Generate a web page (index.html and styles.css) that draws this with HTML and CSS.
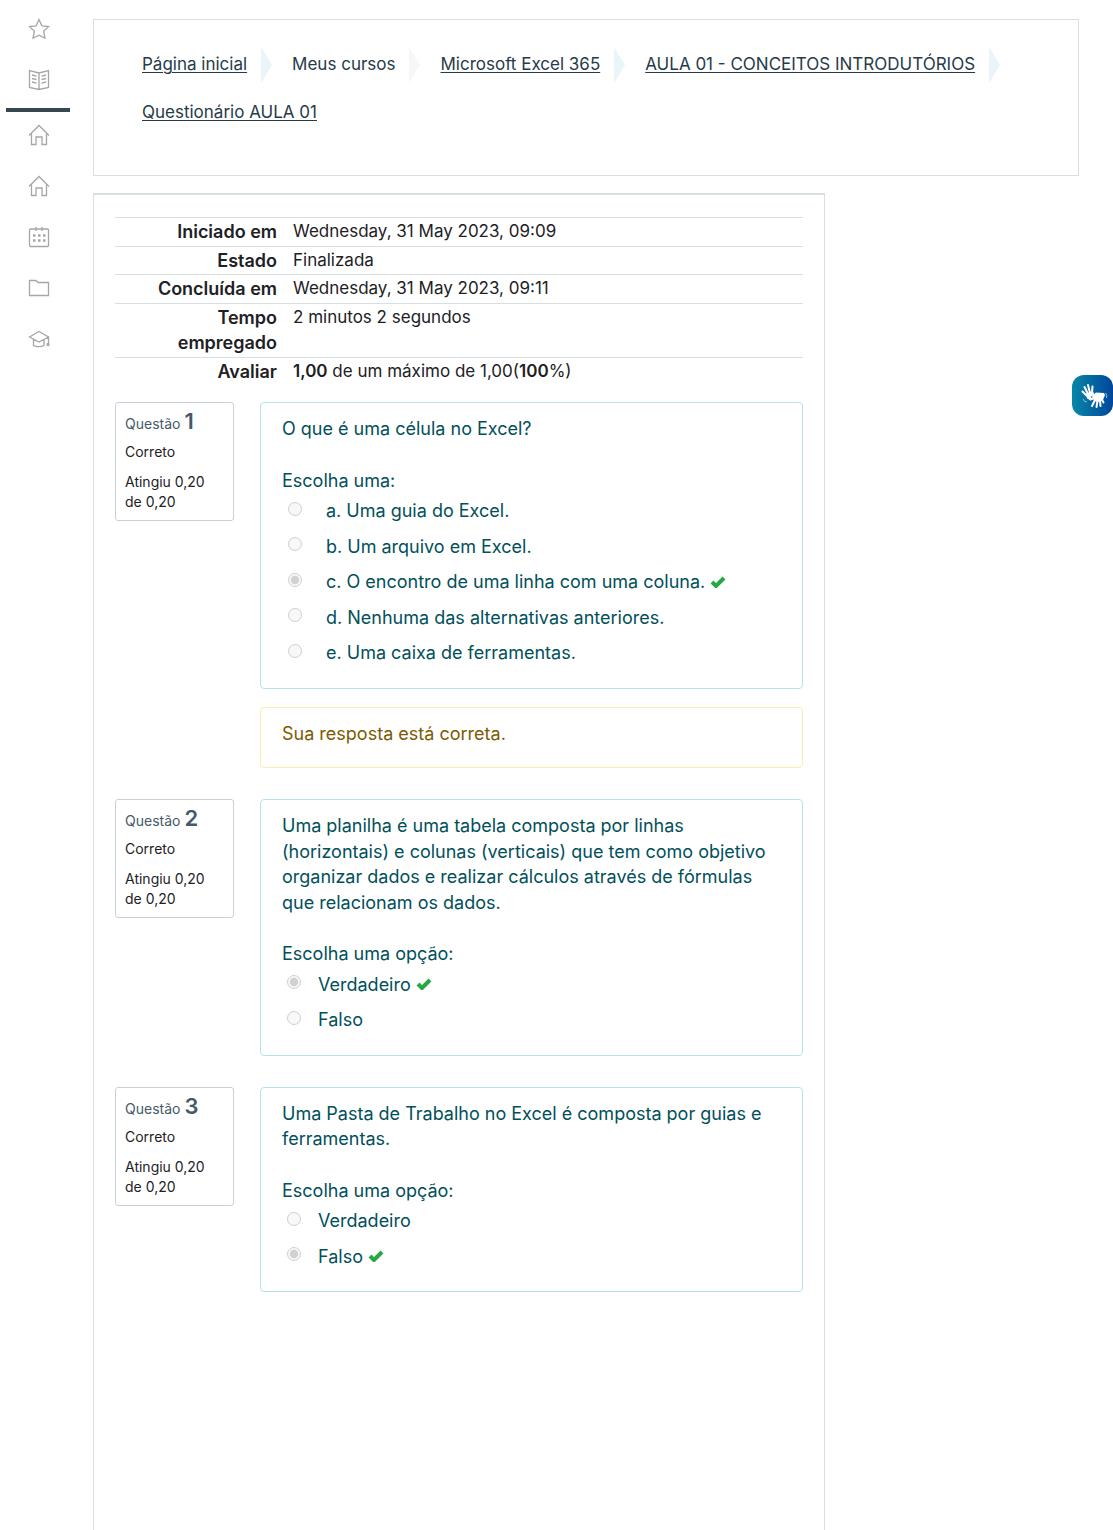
FILE: index.html
```html
<!DOCTYPE html>
<html lang="pt-BR">
<head>
  <meta charset="UTF-8">
  <meta name="viewport" content="width=device-width, initial-scale=1.0">
  <title>Questionário AULA 01</title>
  <link rel="stylesheet" href="styles.css">
</head>
<body>
  <nav class="sidebar">
    <a href="#" class="side-link">
      <svg class="icon" viewBox="0 0 22 22"><path d="M11 1.500l2.900 6.300 6.600.8-4.900 4.600 1.400 6.800L11 17.200 5 20l1.400-6.800L1.500 8.600l6.600-.8z"/></svg>
    </a>
    <a href="#" class="side-link">
      <svg class="icon" viewBox="0 0 22 22"><path d="M11 4L1.500 1.500v17L11 20.500l9.500-2V1.500zM11 4v16.500M4 6l4.500 1.200M4 9.500l4.500 1.200M4 13l4.500 1.200M18 6l-4.500 1.200M18 9.500l-4.500 1.200M18 13l-4.500 1.200"/></svg>
    </a>
    <div class="side-bar"></div>
    <a href="#" class="side-link">
      <svg class="icon" viewBox="0 0 22 22"><path d="M1 11.500L11 1.500l10 10M3.500 9.500v11h4.500v-7.500h6v7.500h4.500v-11"/></svg>
    </a>
    <a href="#" class="side-link">
      <svg class="icon" viewBox="0 0 22 22"><path d="M1 11.500L11 1.500l10 10M3.500 9.500v11h4.500v-7.500h6v7.500h4.500v-11"/></svg>
    </a>
    <a href="#" class="side-link">
      <svg class="icon" viewBox="0 0 22 22"><rect x="1.500" y="3" width="19" height="17.500" rx="1"/><path d="M8 1v4M14 1v4"/><path class="dots" d="M5 9.500h2.500M10 9.500h2.500M15 9.500h2.500M5 14.500h2.500M10 14.500h2.500M15 14.500h2.500"/></svg>
    </a>
    <a href="#" class="side-link">
      <svg class="icon" viewBox="0 0 22 22"><path d="M1.500 18.500v-15h6.500l2 2h10.500v13z"/></svg>
    </a>
    <a href="#" class="side-link">
      <svg class="icon" viewBox="0 0 22 22"><path d="M11 3.500L1.500 9l9.500 5 9.500-5zM5.500 11.500v6c2.500 1.500 8 1.500 10.500 0v-6M20.500 9v7"/><circle cx="20" cy="16.500" r="1"/></svg>
    </a>
  </nav>

  <div class="page">
    <header class="page-header">
      <ol class="breadcrumb">
        <li><a href="#">Página inicial</a></li>
        <li class="plain"><span>Meus cursos</span></li>
        <li><a href="#">Microsoft Excel 365</a></li>
        <li><a href="#">AULA 01 - CONCEITOS INTRODUTÓRIOS</a></li>
        <li><a href="#">Questionário AULA 01</a></li>
      </ol>
    </header>

    <main class="content">
      <table class="summary">
        <tr><th scope="row">Iniciado em</th><td>Wednesday, 31 May 2023, 09:09</td></tr>
        <tr><th scope="row">Estado</th><td>Finalizada</td></tr>
        <tr><th scope="row">Concluída em</th><td>Wednesday, 31 May 2023, 09:11</td></tr>
        <tr><th scope="row">Tempo empregado</th><td>2 minutos 2 segundos</td></tr>
        <tr><th scope="row">Avaliar</th><td><b>1,00</b> de um máximo de 1,00(<b>100</b>%)</td></tr>
      </table>

      <section class="question">
        <div class="info">
          <h3>Questão <span class="number">1</span></h3>
          <p>Correto</p>
          <p>Atingiu 0,20 de 0,20</p>
        </div>
        <div class="body">
          <div class="formulation">
            <p class="text">O que é uma célula no Excel?</p>
            <p>Escolha uma:</p>
            <div class="option multi"><input type="radio" name="q1" id="q1a" disabled><label for="q1a">a. Uma guia do Excel.</label></div>
            <div class="option multi"><input type="radio" name="q1" id="q1b" disabled><label for="q1b">b. Um arquivo em Excel.</label></div>
            <div class="option multi"><input type="radio" name="q1" id="q1c" checked disabled><label for="q1c">c. O encontro de uma linha com uma coluna.</label>
              <svg class="check" viewBox="0 0 16 12"><path d="M2 6l4 4 8-8"/></svg></div>
            <div class="option multi"><input type="radio" name="q1" id="q1d" disabled><label for="q1d">d. Nenhuma das alternativas anteriores.</label></div>
            <div class="option multi"><input type="radio" name="q1" id="q1e" disabled><label for="q1e">e. Uma caixa de ferramentas.</label></div>
          </div>
          <div class="feedback">Sua resposta está correta.</div>
        </div>
      </section>

      <section class="question">
        <div class="info">
          <h3>Questão <span class="number">2</span></h3>
          <p>Correto</p>
          <p>Atingiu 0,20 de 0,20</p>
        </div>
        <div class="body">
          <div class="formulation">
            <p class="text">Uma planilha é uma tabela composta por linhas (horizontais) e colunas (verticais) que tem como objetivo organizar dados e realizar cálculos através de fórmulas que relacionam os dados.</p>
            <p>Escolha uma opção:</p>
            <div class="option"><input type="radio" name="q2" id="q2v" checked disabled><label for="q2v">Verdadeiro</label>
              <svg class="check" viewBox="0 0 16 12"><path d="M2 6l4 4 8-8"/></svg></div>
            <div class="option"><input type="radio" name="q2" id="q2f" disabled><label for="q2f">Falso</label></div>
          </div>
        </div>
      </section>

      <section class="question">
        <div class="info">
          <h3>Questão <span class="number">3</span></h3>
          <p>Correto</p>
          <p>Atingiu 0,20 de 0,20</p>
        </div>
        <div class="body">
          <div class="formulation">
            <p class="text">Uma Pasta de Trabalho no Excel é composta por guias e ferramentas.</p>
            <p>Escolha uma opção:</p>
            <div class="option"><input type="radio" name="q3" id="q3v" disabled><label for="q3v">Verdadeiro</label></div>
            <div class="option"><input type="radio" name="q3" id="q3f" checked disabled><label for="q3f">Falso</label>
              <svg class="check" viewBox="0 0 16 12"><path d="M2 6l4 4 8-8"/></svg></div>
          </div>
        </div>
      </section>
    </main>
  </div>

  <button class="libras" aria-label="Libras">
    <svg viewBox="0 0 41 41">
      <path class="hand" d="M15 21L10.500 16.500M16 19L12.500 12M18 18L16 10M20 18L20.500 11.500"/>
      <path class="palm" d="M14 18.500l7-2 1.500 3-4 2.500 2 1.500-2.500 1.500-3-1.500z"/>
      <path class="hand" d="M23 25L20 31M25.500 26L24.500 32M28 25L28.500 31M29 23L31.500 27.500M24 22L18.500 24.500"/>
      <path class="palm" d="M20 21l4-3.500 8 .5 1 2-2 5-5 2-4-1z"/>
      <path class="motion" d="M11 24q1 3 4 3M33.500 18q2 2 1 5"/>
    </svg>
  </button>
</body>
</html>
```
FILE: styles.css
```css
* {
  box-sizing: border-box;
}
body {
  margin: 0;
  min-height: 100vh;
  display: flex;
  font-family: Inter, sans-serif;
  font-size: 17px;
  line-height: 150%; /* same line box for the larger question text */
  color: #1d2125;
  background-color: #fff;
}
p, h3 {
  margin: 0;
}

/* Left navigation */
.sidebar {
  width: 77px;
  flex-shrink: 0;
  padding-top: 3px;
}
.side-link {
  display: flex;
  align-items: center;
  justify-content: center;
  height: 51px;
}
.icon {
  width: 22px;
  height: 22px;
  fill: none;
  stroke: #a6a6a6;
  stroke-width: 1.3;
}
.icon .dots {
  stroke-width: 2.5;
}
.side-bar {
  height: 4px;
  margin: 3px 7px -3px 6px;
  background-color: #37474f;
}

.page {
  flex: 1;
  display: flex;
  flex-direction: column;
  padding: 19px 34px 0 16px;
}

/* Breadcrumb */
.page-header {
  border: 1px solid #d8dfe1;
  padding: 21px 40px 38px 48px;
  margin-bottom: 17px;
}
.breadcrumb {
  display: flex;
  flex-wrap: wrap;
  column-gap: 20px;
  list-style: none;
  margin: 0;
  padding: 0;
}
.breadcrumb li {
  display: flex;
  align-items: center;
  gap: 14px;
  height: 48px;
  color: #263b48;
}
.breadcrumb a {
  color: #263b48;
  text-underline-offset: 2px;
}
.breadcrumb li:not(:last-child)::after {
  content: "";
  border-left: 11px solid #ebf4f8;
  border-top: 18px solid transparent;
  border-bottom: 18px solid transparent;
}
.breadcrumb li.plain::after {
  border-left-color: #f6f7f8;
}

/* Quiz review */
.content {
  flex: 1;
  width: calc(100% - 254px);
  border: 1px solid #d8dfe3;
  border-top-width: 2px;
  border-bottom: 0;
  padding: 22px 21px;
}
.summary {
  width: 100%;
  border-collapse: collapse;
  margin-bottom: 17px;
}
.summary th, .summary td {
  border-top: 1px solid #d8dfe3;
  padding: 1px 8px;
  vertical-align: top;
}
.summary th {
  width: 170px;
  padding-left: 24px;
  text-align: right;
  font-size: 18px;
  font-weight: 600;
}
b {
  font-weight: 600;
}
.question {
  display: flex;
  align-items: flex-start;
  gap: 26px;
  margin-bottom: 31px;
}
.info {
  width: 119px;
  flex-shrink: 0;
  padding: 5px 9px 8px;
  border: 1px solid #cad0d9;
  border-radius: 3px;
  font-size: 14px;
  line-height: 20px;
}
.info h3 {
  font-size: 14px;
  font-weight: 400;
  line-height: 26px;
  color: #455a68;
}
.info .number {
  font-size: 22px;
  font-weight: 600;
}
.info p {
  margin-top: 5px;
}
.info p + p {
  margin-top: 10px;
}
.body {
  flex: 1;
}
.formulation, .feedback {
  border: 1px solid #b8e2ea;
  border-radius: 4px;
  padding: 13px 21px 17px;
  font-size: 18px;
  color: #01505a;
}
.formulation .text {
  margin-bottom: 26px;
}
.feedback {
  margin-top: 18px;
  padding-bottom: 21px;
  border-color: #ffeab0;
  color: #7d5a00;
}
.option {
  display: flex;
  align-items: center;
  padding: 5px 0;
}
.option input {
  width: 14px;
  height: 14px;
  margin: 0 17px 4px 5px;
}
.option.multi input {
  margin: 0 24px 4px 6px;
}
.check {
  width: 16px;
  height: 12px;
  margin-left: 5px;
  fill: none;
  stroke: #28a745;
  stroke-width: 4;
}

/* Sign language widget */
.libras {
  position: fixed;
  top: 375px;
  right: 0;
  width: 41px;
  height: 41px;
  padding: 0;
  border: 0;
  border-radius: 12px;
  background: linear-gradient(90deg, #0787a8, #01469b);
  cursor: pointer;
}
.libras svg {
  display: block;
}
.hand {
  fill: none;
  stroke: #fff;
  stroke-width: 2;
  stroke-linecap: round;
}
.palm {
  fill: #fff;
}
.motion {
  fill: none;
  stroke: #8fc4dd;
}
```
